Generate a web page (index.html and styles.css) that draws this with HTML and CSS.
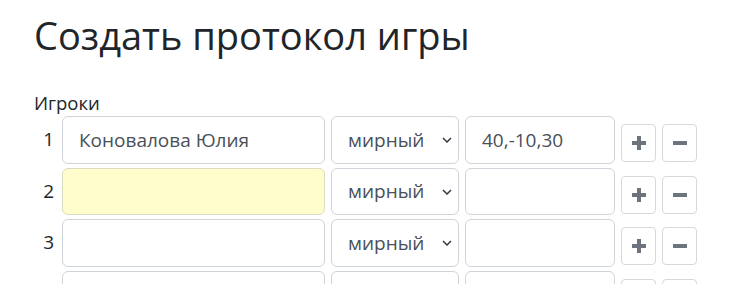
FILE: index.html
```html
<!DOCTYPE html>
<html lang="ru">
<head>
<meta charset="utf-8">
<title>Создать протокол игры</title>
<link rel="stylesheet" href="styles.css">
</head>
<body>
<div class="page">
  <h1 class="title">Создать протокол игры</h1>
  <div class="label">Игроки</div>
  <div class="players">
    <div class="row">
      <span class="num">1</span>
      <input class="field name" type="text" value="Коновалова Юлия">
      <div class="select-wrap">
        <select class="field role"><option>мирный</option></select>
        <svg class="chev" width="10" height="6" viewBox="0 0 10 6"><path d="M1 1 L5 5 L9 1" fill="none" stroke="#343a40" stroke-width="1.5"/></svg>
      </div>
      <input class="field score" type="text" value="40,-10,30">
      <button class="btn" type="button"><svg width="14" height="14" viewBox="0 0 14 14"><path d="M5 0h4v5h5v4H9v5H5V9H0V5h5z" fill="#6c757d"/></svg></button>
      <button class="btn" type="button"><svg width="14" height="14" viewBox="0 0 14 14"><rect x="0" y="5" width="14" height="4" fill="#6c757d"/></svg></button>
    </div>
    <div class="row">
      <span class="num">2</span>
      <input class="field name filled" type="text" value="">
      <div class="select-wrap">
        <select class="field role"><option>мирный</option></select>
        <svg class="chev" width="10" height="6" viewBox="0 0 10 6"><path d="M1 1 L5 5 L9 1" fill="none" stroke="#343a40" stroke-width="1.5"/></svg>
      </div>
      <input class="field score" type="text" value="">
      <button class="btn" type="button"><svg width="14" height="14" viewBox="0 0 14 14"><path d="M5 0h4v5h5v4H9v5H5V9H0V5h5z" fill="#6c757d"/></svg></button>
      <button class="btn" type="button"><svg width="14" height="14" viewBox="0 0 14 14"><rect x="0" y="5" width="14" height="4" fill="#6c757d"/></svg></button>
    </div>
    <div class="row">
      <span class="num">3</span>
      <input class="field name" type="text" value="">
      <div class="select-wrap">
        <select class="field role"><option>мирный</option></select>
        <svg class="chev" width="10" height="6" viewBox="0 0 10 6"><path d="M1 1 L5 5 L9 1" fill="none" stroke="#343a40" stroke-width="1.5"/></svg>
      </div>
      <input class="field score" type="text" value="">
      <button class="btn" type="button"><svg width="14" height="14" viewBox="0 0 14 14"><path d="M5 0h4v5h5v4H9v5H5V9H0V5h5z" fill="#6c757d"/></svg></button>
      <button class="btn" type="button"><svg width="14" height="14" viewBox="0 0 14 14"><rect x="0" y="5" width="14" height="4" fill="#6c757d"/></svg></button>
    </div>
    <div class="row">
      <span class="num">4</span>
      <input class="field name" type="text" value="">
      <div class="select-wrap">
        <select class="field role"><option>мирный</option></select>
        <svg class="chev" width="10" height="6" viewBox="0 0 10 6"><path d="M1 1 L5 5 L9 1" fill="none" stroke="#343a40" stroke-width="1.5"/></svg>
      </div>
      <input class="field score" type="text" value="">
      <button class="btn" type="button"><svg width="14" height="14" viewBox="0 0 14 14"><path d="M5 0h4v5h5v4H9v5H5V9H0V5h5z" fill="#6c757d"/></svg></button>
      <button class="btn" type="button"><svg width="14" height="14" viewBox="0 0 14 14"><rect x="0" y="5" width="14" height="4" fill="#6c757d"/></svg></button>
    </div>
  </div>
</div>
</body>
</html>
```

FILE: styles.css
```css
html, body {
  margin: 0;
  padding: 0;
  background: #fff;
}

body {
  font-family: "Open Sans", "Noto Sans", "DejaVu Sans", sans-serif;
  color: #212529;
  overflow: hidden;
}

.page {
  padding: 11px 0 0 34px;
}

.title {
  margin: 0 0 31px;
  font-size: 38px;
  line-height: 48px;
  font-weight: 400;
  color: #212529;
}

.label {
  font-size: 18.5px;
  line-height: 25px;
  margin-bottom: 1px;
}

.players {
  display: flex;
  flex-direction: column;
  gap: 4px;
}

.row {
  display: flex;
  align-items: flex-start;
  gap: 6px;
  height: 47.5px;
}

.num {
  width: 20px;
  padding-right: 2px;
  text-align: right;
  font-size: 19px;
  line-height: 47.5px;
  color: #212529;
}

.field {
  box-sizing: border-box;
  height: 47.5px;
  margin: 0;
  padding: 0 16px;
  border: 1px solid #ced4da;
  border-radius: 6px;
  background: #fff;
  font-family: inherit;
  font-size: 19px;
  color: #495057;
  outline: none;
}

.name {
  width: 263px;
}

.filled {
  background: #fffdcc;
  border-color: #dcdcc0;
}

.select-wrap {
  position: relative;
  width: 128px;
  height: 47.5px;
}

.role {
  width: 128px;
  appearance: none;
  -webkit-appearance: none;
}

.chev {
  position: absolute;
  right: 7px;
  top: 21px;
  pointer-events: none;
}

.score {
  width: 150px;
}

.btn {
  box-sizing: border-box;
  width: 35px;
  height: 38px;
  margin-top: 8px;
  padding: 0;
  border: 1px solid #d6d8db;
  border-radius: 4px;
  background: #fff;
  display: flex;
  align-items: center;
  justify-content: center;
}

.btn svg {
  display: block;
}
```
